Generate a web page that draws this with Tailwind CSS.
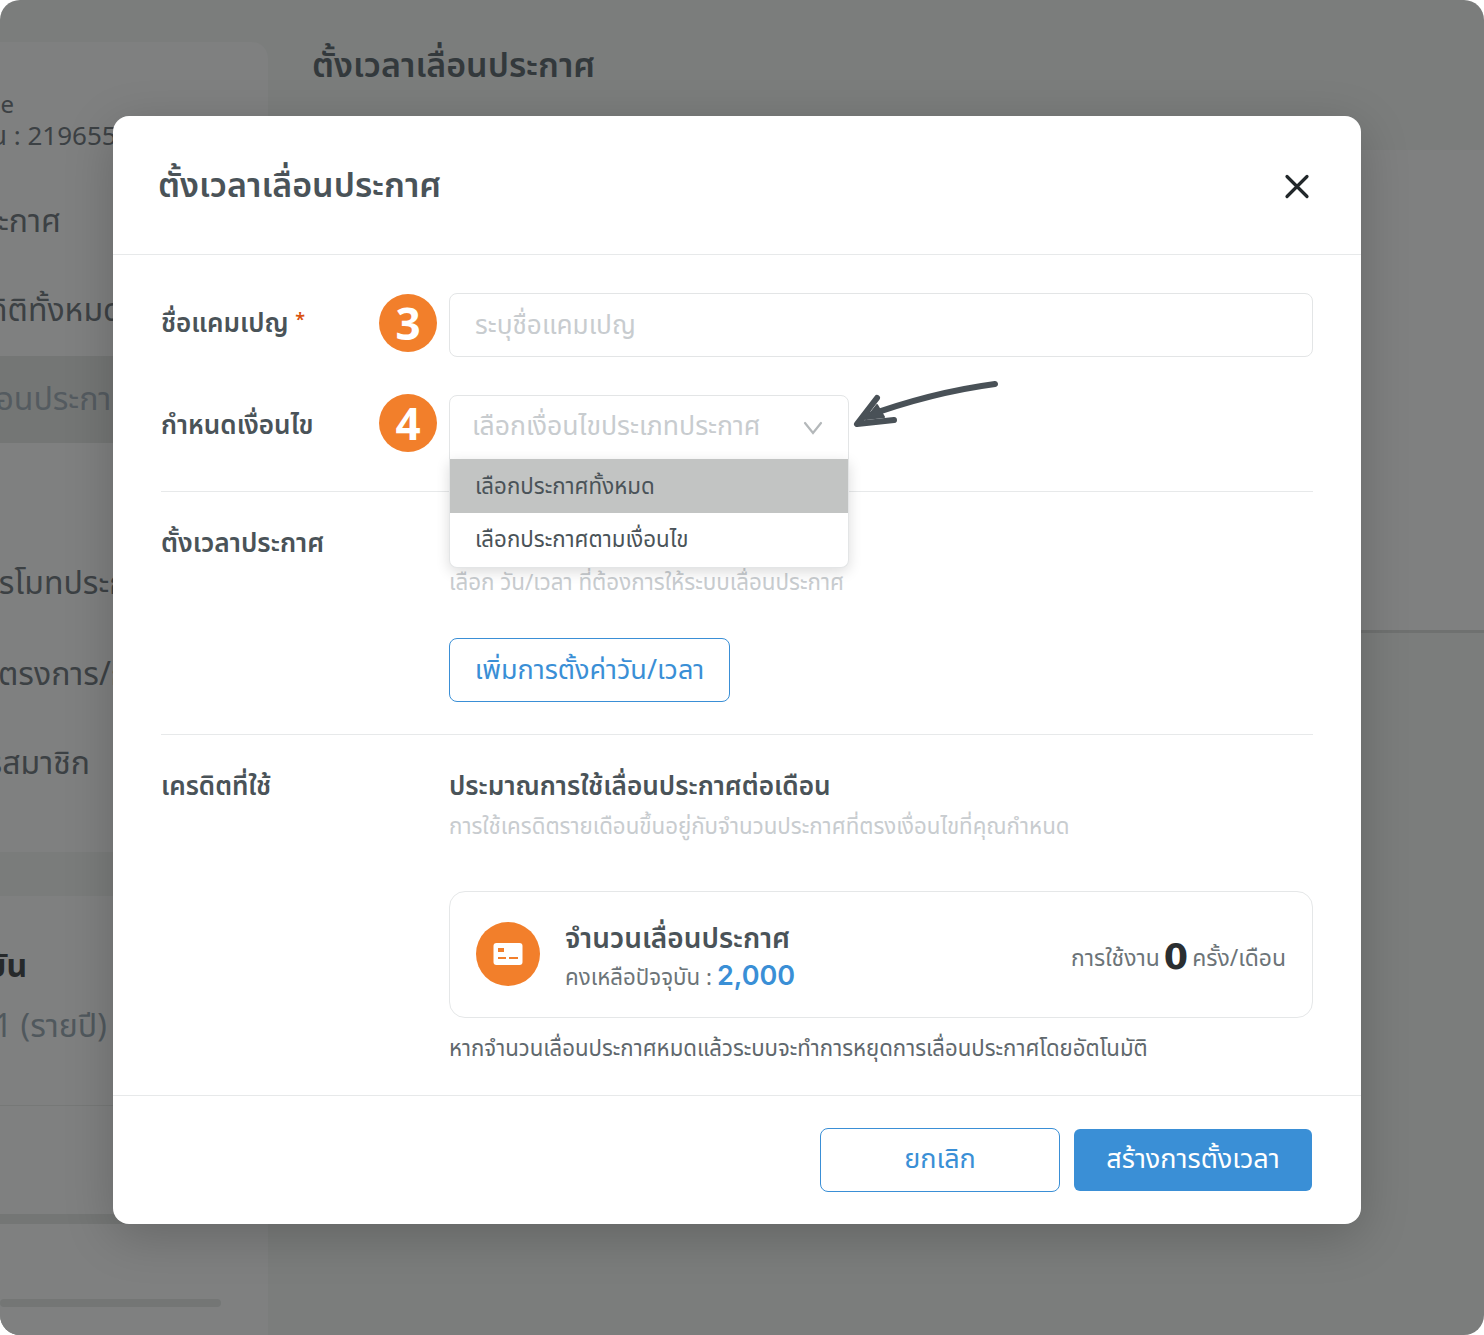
<!DOCTYPE html>
<html lang="th">
<head>
  <meta charset="UTF-8">
  <title>ตั้งเวลาเลื่อนประกาศ</title>
  <script src="https://cdn.jsdelivr.net/npm/@tailwindcss/browser@4"></script>
</head>
<body class="bg-white font-['Noto_Sans','Noto_Sans_Thai','Noto_Sans_CJK_SC',sans-serif]">
  <div class="relative w-[1484px] h-[1335px] overflow-hidden bg-[#7b7d7c] rounded-[20px] text-[#4a5358]">

    <!-- page behind the modal -->
    <div class="flex h-full">
      <aside class="w-[268px] h-[1293px] mt-[42px] pt-[47px] bg-[#7f8080] rounded-tr-[16px] text-[#3c4144] overflow-hidden">
        <p class="-ml-[139px] h-[30px] text-[24px] leading-[30px] whitespace-nowrap">Store Name e</p>
        <p class="-ml-[75px] h-[32px] text-[26px] leading-[32px] whitespace-nowrap">รหัสร้าน : 219655123</p>
        <nav class="mt-[24px] text-[32px] whitespace-nowrap">
          <div class="h-[89px] flex items-center -ml-[37px]">ประกาศ</div>
          <div class="h-[89px] flex items-center -ml-[30px]">สถิติทั้งหมด</div>
          <div class="h-[87px] mt-[3px] pb-[4px] flex items-center -ml-[40px] pl-[40px] bg-[#747675] text-[#545b60]"><span class="-ml-[32px]">เลื่อนประกาศ</span></div>
          <div class="h-[93px] mt-[92px] flex items-center -ml-[30px]">โปรโมทประกาศ</div>
          <div class="h-[89px] flex items-center -ml-[2px]">ตรงการ/กิจกรรม</div>
          <div class="h-[89px] flex items-center -ml-[71px]">สมัครสมาชิก</div>
        </nav>
        <div class="mt-[46px] h-[44px] bg-[#7a7c7b]"></div>
        <p class="mt-[47px] -ml-[70px] text-[32px] leading-[44px] font-bold text-[#26292b] whitespace-nowrap">ปัจจุบัน</p>
        <p class="mt-[16px] -ml-[6px] text-[32px] leading-[44px] text-[#50585d] whitespace-nowrap">1 (รายปี)</p>
        <div class="mt-[58px] border-t border-[#767877]"></div>
        <div class="mt-[108px] h-[10px] bg-[#747675]"></div>
        <div class="mt-[75px] w-[221px] h-[8px] rounded-full bg-[#747675]"></div>
      </aside>
      <main class="flex-1">
        <div class="h-[150px] pl-[44px] pt-[39px]">
          <h1 class="text-[34px] leading-[50px] font-semibold text-[#33393c]">ตั้งเวลาเลื่อนประกาศ</h1>
        </div>
        <div class="h-[483px] bg-[#7f8080] border-b-[3px] border-[#6f7170]"></div>
      </main>
    </div>

    <!-- modal -->
    <div class="absolute left-[113px] top-[116px] w-[1248px] h-[1108px] bg-white rounded-[16px] shadow-[0_12px_50px_rgba(0,0,0,0.2)] flex flex-col">
      <header class="h-[139px] shrink-0 border-b border-[#e7e9ea] flex items-center justify-between pl-[45px] pr-[50px]">
        <h2 class="-mt-[2px] text-[34px] font-semibold text-[#4a5358]">ตั้งเวลาเลื่อนประกาศ</h2>
        <svg class="mt-[2px]" width="28" height="28" viewBox="0 0 28 28" fill="none" stroke="#22282b" stroke-width="3.2" stroke-linecap="round"><path d="M4 4.5l20 20M24 4.5l-20 20"/></svg>
      </header>

      <div class="flex-1 px-[48px]">
        <!-- name + condition -->
        <section class="pt-[38px] pb-[32px] border-b border-[#e7e9ea]">
          <div class="flex h-[64px]">
            <label class="w-[288px] pt-[4px] text-[26px] leading-[44px] font-semibold">ชื่อแคมเปญ <span class="align-[6px] text-[18px] text-[#d9530f]">*</span></label>
            <div class="flex-1 border border-[#e3e5e6] rounded-[8px] px-[25px] flex items-center text-[26.2px] text-[#c8cccf]">ระบุชื่อแคมเปญ</div>
          </div>
          <div class="flex h-[64px] mt-[38px]">
            <label class="w-[288px] pt-[7px] text-[26px] leading-[44px] font-semibold">กำหนดเงื่อนไข</label>
            <div class="relative w-[400px] z-10">
              <div class="h-[65px] border border-[#e3e5e6] rounded-t-[8px] bg-white pl-[22px] pr-[25px] pb-[3px] flex items-center justify-between text-[26.6px] text-[#c8cccf]">
                <span>เลือกเงื่อนไขประเภทประกาศ</span>
                <svg class="mt-[3px]" width="20" height="14" viewBox="0 0 20 14" fill="none" stroke="#b4b8ba" stroke-width="2.2" stroke-linecap="round"><path d="M2 2l8 10 8-10"/></svg>
              </div>
              <ul class="absolute left-0 top-[64px] w-[400px] bg-white border border-t-0 border-[#e3e5e6] rounded-b-[8px] shadow-[0_4px_14px_rgba(0,0,0,0.14)] text-[22.3px] text-[#4a5358]">
                <li class="h-[54px] bg-[#c2c4c3] pl-[25px] flex items-center">เลือกประกาศทั้งหมด</li>
                <li class="h-[54px] pl-[25px] pb-[2px] flex items-center">เลือกประกาศตามเงื่อนไข</li>
              </ul>
            </div>
          </div>
        </section>

        <!-- schedule -->
        <section class="flex h-[243px] border-b border-[#e7e9ea]">
          <div class="w-[288px] pt-[28px] text-[26.3px] leading-[44px] font-semibold">ตั้งเวลาประกาศ</div>
          <div class="pt-[74px]">
            <p class="text-[22.4px] leading-[32px] text-[#c8cccf]">เลือก วัน/เวลา ที่ต้องการให้ระบบเลื่อนประกาศ</p>
            <button class="mt-[40px] w-[281px] h-[64px] pb-[2px] border border-[#3a8fd6] rounded-[8px] text-[27px] text-[#3a8fd6]">เพิ่มการตั้งค่าวัน/เวลา</button>
          </div>
        </section>

        <!-- credit -->
        <section class="flex">
          <div class="w-[288px] pt-[28px] text-[26px] leading-[44px] font-semibold">เครดิตที่ใช้</div>
          <div class="flex-1 pt-[28px]">
            <h3 class="text-[26.2px] leading-[44px] font-semibold">ประมาณการใช้เลื่อนประกาศต่อเดือน</h3>
            <p class="mt-[3px] text-[22.3px] leading-[32px] text-[#c8cccf]">การใช้เครดิตรายเดือนขึ้นอยู่กับจำนวนประกาศที่ตรงเงื่อนไขที่คุณกำหนด</p>
            <div class="mt-[49px] h-[127px] border border-[#e5e7e8] rounded-[16px] pl-[26px] pr-[26px] flex items-center">
              <div class="-mt-[2px] w-[64px] h-[64px] rounded-full bg-[#f27f2b] flex items-center justify-center">
                <svg width="30" height="24" viewBox="0 0 30 24"><rect x="0.5" y="1" width="29" height="22" rx="3" fill="#fff"/><rect x="5" y="6" width="6" height="4" fill="#f27f2b"/><rect x="5" y="15" width="8" height="2" fill="#f27f2b"/><rect x="16" y="15" width="9" height="2" fill="#f27f2b"/></svg>
              </div>
              <div class="ml-[25px] pt-[4px]">
                <div class="text-[28px] leading-[38px] font-semibold">จำนวนเลื่อนประกาศ</div>
                <div class="mt-[2px] flex items-center h-[38px] text-[22.3px] text-[#6c7478]">คงเหลือปัจจุบัน :<span class="ml-[5px] font-['Inter',sans-serif] text-[27px] font-semibold text-[#3a8fd6]">2,000</span></div>
              </div>
              <div class="ml-auto pt-[8px] flex items-center text-[22.9px] text-[#6c7478]">การใช้งาน<span class="mx-[4px] -mt-[4px] font-['DejaVu_Sans',sans-serif] text-[35px] leading-[40px] font-bold text-[#2a2e31]">0</span>ครั้ง/เดือน</div>
            </div>
            <p class="mt-[14px] text-[22.2px] leading-[32px] text-[#5f686d]">หากจำนวนเลื่อนประกาศหมดแล้วระบบจะทำการหยุดการเลื่อนประกาศโดยอัตโนมัติ</p>
          </div>
        </section>
      </div>

      <footer class="h-[129px] shrink-0 border-t border-[#e7e9ea] flex items-center justify-end gap-[14px] pr-[49px]">
        <button class="w-[240px] h-[64px] pb-[3px] border border-[#3a8fd6] rounded-[8px] text-[27px] text-[#3a8fd6]">ยกเลิก</button>
        <button class="w-[238px] h-[62px] pb-[3px] bg-[#3a8fd6] rounded-[6px] text-[27px] text-white">สร้างการตั้งเวลา</button>
      </footer>
    </div>

    <!-- annotations drawn over the screenshot -->
    <div class="absolute left-[379px] top-[294px] w-[58px] h-[58px] rounded-full bg-[#f27f2b] flex items-center justify-center text-[44px] font-bold text-white">3</div>
    <div class="absolute left-[379px] top-[394px] w-[58px] h-[58px] rounded-full bg-[#f27f2b] flex items-center justify-center text-[44px] font-bold text-white">4</div>
    <svg class="absolute left-[840px] top-[370px]" width="170" height="70" viewBox="840 370 170 70" fill="none" stroke="#495157" stroke-linecap="round" stroke-linejoin="round">
      <path d="M995 384C950 390 905 402 864 417" stroke-width="6"/>
      <path d="M877 398L857 424L894 420" stroke-width="6"/>
      <path d="M877 405L866 419L884 417Z" fill="#495157" stroke-width="2"/>
    </svg>
  </div>
</body>
</html>
